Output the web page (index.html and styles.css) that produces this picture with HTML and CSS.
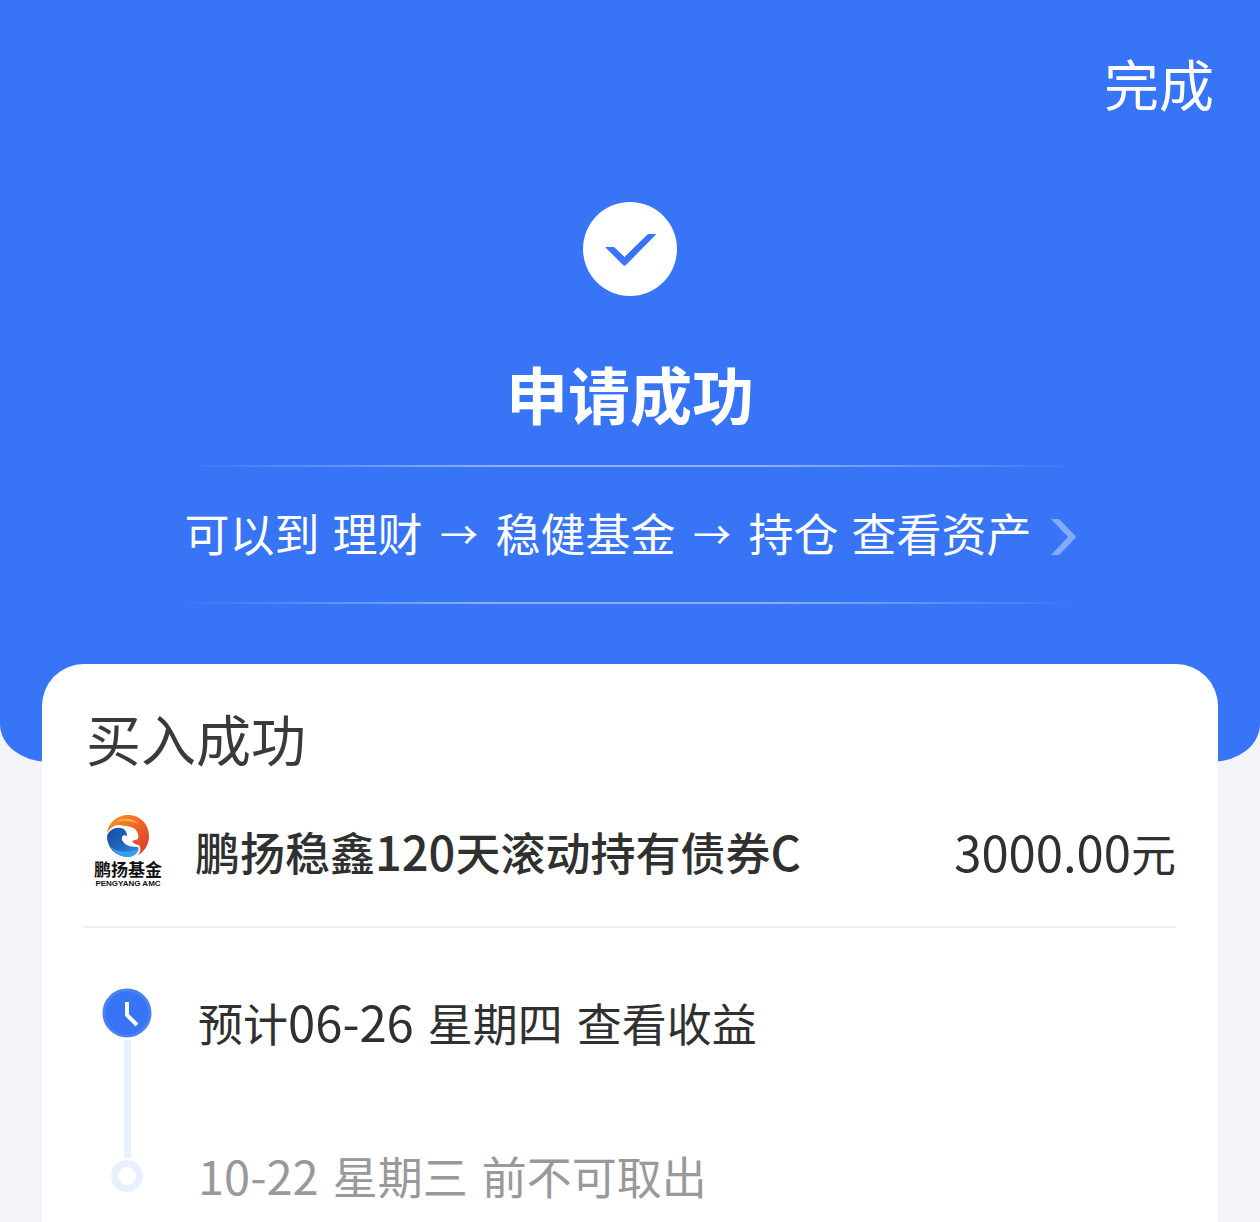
FILE: index.html
```html
<!DOCTYPE html>
<html lang="zh-CN">
<head>
<meta charset="utf-8">
<meta name="viewport" content="width=device-width, initial-scale=1">
<title>申请成功</title>
<link rel="stylesheet" href="styles.css">
</head>
<body>
<header class="hero">
  <div class="topbar"><button class="done" type="button">完成</button></div>
  <svg class="success-icon" viewBox="0 0 94 94" aria-hidden="true">
    <circle cx="47" cy="47" r="47" fill="#fff"/>
    <path d="M23 45.500H31L41.500 55.500L65 32.500H72.500L43 62.500Q41.500 64 40 62.500Z" fill="#3875f6" stroke="#3875f6" stroke-width="1" stroke-linejoin="round"/>
  </svg>
  <h1 class="title">申请成功</h1>
  <a class="path" href="#holdings">
    <span>可以到</span><span>理财</span><span class="arrow">→</span><span>稳健基金</span><span class="arrow">→</span><span>持仓</span><span>查看资产</span>
    <svg class="chevron" viewBox="0 0 25 36" aria-hidden="true"><path d="M0 0H8L24 16.500Q25.500 18 24 19.500L8 36H0L17 18Z" fill="#84abfa"/></svg>
  </a>
</header>
<main class="card">
  <h2 class="card-title">买入成功</h2>
  <div class="fund">
    <div class="logo">
      <svg class="logo-mark" viewBox="0 0 42 42" aria-hidden="true">
        <defs>
          <linearGradient id="warm" x1="0" y1="0" x2="1" y2="1"><stop offset="0" stop-color="#f39a2b"/><stop offset=".5" stop-color="#ef6426"/><stop offset="1" stop-color="#d5352a"/></linearGradient>
          <linearGradient id="cool" x1="0" y1="0" x2="1" y2="1"><stop offset="0" stop-color="#174f9f"/><stop offset=".5" stop-color="#1f64c0"/><stop offset="1" stop-color="#2f97e6"/></linearGradient>
        </defs>
        <path d="M0 18C1 8 10 0 21 0C33 0 42 9 42 21C42 30 37 37 31 40C34 36 34 33 32 30C29 30 26 28 25 26L31 24C32 21 31 17 28 14C24 11 18 11 12 10C7 10 3 13 0 18Z" fill="url(#warm)"/>
        <path d="M8 7C15 2 26 3 32 9C25 6 16 5 8 7Z" fill="#fbae45"/>
        <path d="M0 21C2 15 8 12 13 13C17 13 20 16 20 21C18 20 16 20 15 22C14 27 19 32 31 32C33 36 28 41 22 42C8 42 0 32 0 21Z" fill="url(#cool)"/>
        <path d="M4 32C12 38 22 38 32 34C30 39 26 42 21 42C14 42 8 38 4 32Z" fill="#3a9fee"/>
      </svg>
      <span class="logo-cn">鹏扬基金</span>
      <span class="logo-en">PENGYANG AMC</span>
    </div>
    <span class="fund-name">鹏扬稳鑫<span class="num">120</span>天滚动持有债券<span class="num">C</span></span>
    <span class="amount"><span class="num">3000.00</span>元</span>
  </div>
  <ol class="timeline">
    <li class="step">
      <span class="rail">
        <svg class="clock" viewBox="0 0 50 50" aria-hidden="true"><circle cx="25" cy="25" r="23" fill="#3875f6" stroke="#4c82ee" stroke-width="3"/><path d="M25 14V27L35 37" fill="none" stroke="#fff" stroke-width="4"/></svg>
        <span class="line"></span>
      </span>
      <span class="step-text"><span>预计<span class="num">06-26</span></span> <span>星期四</span> <span>查看收益</span></span>
    </li>
    <li class="step pending">
      <span class="rail"><span class="ring"></span></span>
      <span class="step-text"><span class="num">10-22</span> <span>星期三</span> <span>前不可取出</span></span>
    </li>
  </ol>
</main>
</body>
</html>
```
FILE: styles.css
```css
* { box-sizing: border-box; }

body {
  margin: 0;
  min-height: 100vh;
  display: flex;
  flex-direction: column;
  background: #f3f3f8;
  color: #303030;
  font-family: "Noto Sans CJK SC", sans-serif;
  font-size: 45px;
  line-height: 66px;
}

h1, h2, ol { margin: 0; padding: 0; }

.hero {
  display: flex;
  flex-direction: column;
  align-items: center;
  padding: 42px 46px 158px;
  background: #3875f6;
  color: #fff;
  border-radius: 0 0 48px 48px / 0 0 38px 38px;
}

.topbar {
  align-self: stretch;
  display: flex;
  justify-content: flex-end;
}

.done {
  padding: 0;
  border: 0;
  background: none;
  color: inherit;
  font: inherit;
  font-size: 55px;
  line-height: 80px;
  cursor: pointer;
}

.success-icon {
  width: 94px;
  height: 94px;
  margin-top: 80px;
}

.title {
  margin: 52px 0 27px;
  font-size: 62px;
  font-weight: 700;
  line-height: 90px;
}

.path {
  display: flex;
  align-items: center;
  justify-content: center;
  gap: 13px;
  padding: 33px 0 36px;
  border: solid transparent;
  border-width: 2px 0;
  border-image: linear-gradient(90deg, transparent, #8db1fa 35%, #8db1fa 65%, transparent) 1;
  border-image-width: 2px 0;
  color: inherit;
  text-decoration: none;
  white-space: nowrap;
}

.arrow {
  width: 47px;
  font-size: 38px;
  text-align: center;
}

.chevron {
  width: 25px;
  height: 36px;
  margin: 8px 0 0 6px;
}

.card {
  flex: 1;
  margin: -98px 42px 0;
  padding: 33px 42px 10px;
  background: #fff;
  border-radius: 42px 42px 0 0;
}

.card-title {
  padding-left: 2px;
  color: #3a3a3a;
  font-size: 55px;
  font-weight: 400;
  line-height: 80px;
}

.fund {
  display: flex;
  align-items: center;
  gap: 23px;
  padding: 38px 0;
  border-bottom: 2px solid #efefef;
}

.logo {
  width: 88px;
  display: flex;
  flex-direction: column;
  align-items: center;
  color: #111;
  font-weight: 700;
  white-space: nowrap;
}

.logo-mark {
  width: 42px;
  height: 42px;
}

.logo-cn {
  margin-top: 3px;
  font-size: 17px;
  line-height: 18px;
}

.logo-en {
  margin-top: 2px;
  font-family: "Liberation Sans", sans-serif;
  font-size: 8px;
  line-height: 8px;
}

.fund-name {
  flex: 1;
  font-weight: 500;
}

.num { font-size: 49px; }

.fund-name .num,
.pending .num { font-size: 47px; }

.timeline {
  padding-top: 60px;
  list-style: none;
}

.step {
  display: flex;
  gap: 28px;
}

.rail {
  width: 86px;
  display: flex;
  flex-direction: column;
  align-items: center;
}

.clock {
  width: 50px;
  height: 50px;
}

.line {
  width: 7px;
  height: 118px;
  margin: 2px 0;
  background: #e8f0ff;
}

.ring {
  width: 32px;
  height: 32px;
  border: 7px solid #e8f0ff;
  border-radius: 50%;
}

.step-text {
  display: flex;
  align-items: baseline;
  align-self: flex-start;
  gap: 14px;
}

.pending { color: #999; }

.pending .step-text { margin-top: -18px; }
```
